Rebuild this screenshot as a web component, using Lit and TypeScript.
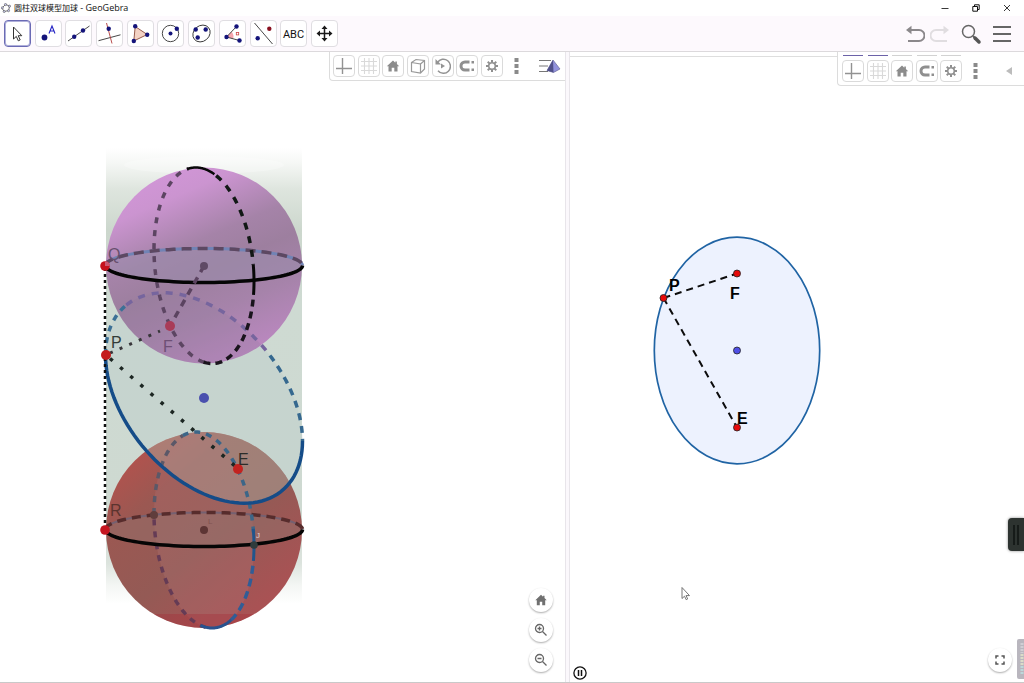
import { LitElement, html, svg, css, type TemplateResult } from "lit";
import { customElement, property, state } from "lit/decorators.js";
import { classMap } from "lit/directives/class-map.js";

const NAVY = "#14147a";

const dot = (x: number, y: number, fill = NAVY, r = 2.2) => svg`<circle cx=${x} cy=${y} r=${r} fill=${fill} />`;

const homeGlyph = svg`<path d="M8 2.6 1.8 8.2h1.7v5.2h3.2V9.8h2.6v3.6h3.2V8.2h1.7L11.9 6V3.4h-1.6v1.3z" fill="#8c8c8c" />`;

/* Construction tools, each drawn on a 27 x 27 grid */
const TOOLS: { id: string; label: string; glyph: TemplateResult }[] = [
  { id: "move", label: "Move", glyph: svg`<path d="M9.5 7v12l2.8-2.6 2 4.4 1.9-.9-2-4.2h3.6z" fill="#fff" stroke="#333" stroke-width="1" />` },
  { id: "point", label: "Point", glyph: svg`${dot(9.5, 17.5, NAVY, 2.9)}<path d="M14 13.5 17 6l3 7.500M15 11h4" fill="none" stroke="#2424c4" stroke-width="1.1" />` },
  { id: "line", label: "Line", glyph: svg`<path d="M3 21 24.500 6" stroke="#333" stroke-width=".9" />${dot(9.2, 16.800)}${dot(18, 10.500)}` },
  { id: "perpendicular", label: "Perpendicular line", glyph: svg`<path d="M2.500 20.700 24.500 14.800" stroke="#333" stroke-width=".9" /><path d="m10.500 3 5.500 20.500" stroke="#b03a3a" stroke-width=".9" />${dot(12.700, 8.700)}` },
  { id: "polygon", label: "Polygon", glyph: svg`<path d="M8.200 6.500 20.200 14.500 6.800 21z" fill="#f3d2c4" stroke="#8a4a3a" stroke-width=".9" />${dot(8.200, 6.200)}${dot(20.200, 14.700)}${dot(6.800, 21)}` },
  { id: "circle", label: "Circle with centre", glyph: svg`<circle cx="13.500" cy="13.500" r="8.200" fill="none" stroke="#333" stroke-width=".9" />${dot(13.500, 13.500, NAVY, 2)}${dot(19.800, 8.800)}` },
  { id: "conic", label: "Conic through points", glyph: svg`<ellipse cx="13.500" cy="13.500" rx="9.200" ry="7.800" transform="rotate(-40 13.500 13.500)" fill="none" stroke="#333" stroke-width=".9" />${dot(7.700, 9.500)}${dot(17.700, 9.500)}${dot(9.700, 17.500)}` },
  { id: "angle", label: "Angle", glyph: svg`<path d="M7.500 17 12.500 11.700a7 7 0 0 1 1.600 7z" fill="#f5a5ad" /><path d="M17.500 6.500 7.500 17l13 3.500" fill="none" stroke="#333" stroke-width=".9" /><rect x="17.300" y="12.500" width="2.400" height="2.400" fill="none" stroke="#c44" stroke-width=".8" />${dot(17.500, 6.500)}${dot(7.500, 17)}${dot(20.500, 20.500)}` },
  { id: "reflect", label: "Reflect about line", glyph: svg`<path d="M4.500 3 22.500 24" stroke="#333" stroke-width=".9" />${dot(19.300, 8.700, "#8a1020")}${dot(7.700, 18.300)}` },
  { id: "text", label: "Text", glyph: svg`<text x="13.500" y="17.500" text-anchor="middle" class="abc">ABC</text>` },
  { id: "pan", label: "Move graphics view", glyph: svg`<path d="M7 13.500h13M13.500 7v13" stroke="#1a1a1a" stroke-width="1.500" /><path d="m13.500 5.500 3 3.500h-6zM13.500 21.500l3-3.500h-6zM5.500 13.500l3.500-3v6zM21.500 13.500l-3.500-3v6z" fill="#1a1a1a" />` },
];

/* View toolbar glyphs on a 16 x 16 grid */
const VIEW_GLYPHS: Record<string, TemplateResult> = {
  axes: svg`<path d="M0 10.500h16M6.500 0v16" stroke="#929292" stroke-width="1.400" />`,
  grid: svg`<path d="M0 3.500h16M0 8h16M0 12.500h16M3.500 0v16M8 0v16M12.500 0v16" stroke="#d9d9d9" stroke-width="1.100" />`,
  home: homeGlyph,
  cube: svg`<path d="M1.500 4.500 6 1.500l8.500 1v8.500l-4 4-9-1.500zM1.500 4.500l9 1.500v9M10.500 6l4-3.500" fill="none" stroke="#999" stroke-width="1.200" />`,
  rotate: svg`<path d="M2.500 4.500A7 7 0 1 1 3 12.700" fill="none" stroke="#939393" stroke-width="1.500" /><path d="M0.500 1v5.500h5.500z" fill="#939393" /><path d="M6 5.500v5l4-2.500z" fill="#939393" />`,
  magnet: svg`<path d="M10.500 4H6a4 4 0 0 0 0 8h4.500" fill="none" stroke="#8f8f8f" stroke-width="3" /><path d="M12.500 3h2.500v2.500h-2.500zM12.500 10.500h2.500v2.500h-2.500z" fill="#8f8f8f" />`,
  gear: svg`<circle cx="8" cy="8" r="3.300" fill="none" stroke="#8f8f8f" stroke-width="1.600" /><g stroke="#8f8f8f" stroke-width="2">${[0, 45, 90, 135, 180, 225, 270, 315].map((a) => svg`<path d="M8 2v2.300" transform=${`rotate(${a} 8 8)`} />`)}</g>`,
};
const VIEW_NAMES: Record<string, string> = {
  axes: "Axes", grid: "Grid", home: "Standard view", cube: "View direction", rotate: "Rotate view", magnet: "Point capturing", gear: "Settings",
};

/* Path of the curve c + u·cos t + v·sin t, with t in degrees */
function curve(cx: number, cy: number, ux: number, uy: number, vy: number, from: number, to: number): string {
  const steps = 60;
  const pts: string[] = [];
  for (let i = 0; i <= steps; i++) {
    const t = ((from + ((to - from) * i) / steps) * Math.PI) / 180;
    pts.push(`${(cx + ux * Math.cos(t)).toFixed(2)} ${(cy + uy * Math.cos(t) + vy * Math.sin(t)).toFixed(2)}`);
  }
  return "M" + pts.join("L");
}

@customElement("view-toolbar")
class ViewToolbar extends LitElement {
  @property({ type: Array }) items: string[] = [];
  @property({ type: Boolean }) plane = false;

  static styles = css`
    :host { display: block; }
    .bar { display: flex; align-items: center; box-sizing: border-box; height: 29px; padding: 0 3px; background: #fff; border: 1px solid #dcdcdc; border-top: 0; border-right: 0; border-bottom-left-radius: 4px; }
    .plane { height: 34px; padding-top: 5px; padding-left: 4px; }
    .group { display: flex; justify-content: space-between; width: 170px; }
    .plane .group { width: 120px; }
    .slot { position: relative; display: flex; }
    .mark { position: absolute; left: 1px; right: 1px; top: -5px; height: 1px; background: #d2d2d2; }
    .on { background: #6c62a8; }
    button { display: grid; place-items: center; box-sizing: border-box; width: 22px; height: 22px; padding: 0; background: #fff; border: 1px solid #dadada; border-radius: 4px; }
    .bare { border: 0; background: none; }
    .more { width: 26px; }
    .style { margin-left: 10px; }
    .fold { margin-left: 10px; }
  `;

  render() {
    return html`<div class=${classMap({ bar: true, plane: this.plane })} role="toolbar" aria-label="View">
      <div class="group">
        ${this.items.map((name) => html`<span class="slot">
          ${this.plane ? html`<span class=${classMap({ mark: true, on: name === "axes" || name === "grid" })}></span>` : ""}
          <button aria-label=${VIEW_NAMES[name]}><svg width="16" height="16" viewBox="0 0 16 16">${VIEW_GLYPHS[name]}</svg></button>
        </span>`)}
      </div>
      <button class="bare more" aria-label="More"><svg width="5" height="18" viewBox="0 0 5 18"><path d="M.5 1h4v4h-4zM.5 7h4v4h-4zM.5 13h4v4h-4z" fill="#8a8a8a" /></svg></button>
      ${this.plane
        ? html`<button class="bare fold" aria-label="Collapse"><svg width="6" height="8" viewBox="0 0 6 8"><path d="M6 0v8L0 4z" fill="#bcbcbc" /></svg></button>`
        : html`<button class="bare style" aria-label="Style bar"><svg width="22" height="16" viewBox="0 0 22 16"><path d="M0 2.500h12M0 8h9M0 13.500h9" stroke="#777" stroke-width="1.200" /><path d="M14 2 8 12.500l6.500 2 6.500-3.500z" fill="#9292dc" stroke="#5a5a8c" stroke-width=".6" /><path d="M14 2 8 12.500l6.500 2z" fill="#50508a" /></svg></button>`}
    </div>`;
  }
}

@customElement("space-view")
class SpaceView extends LitElement {
  static styles = css`
    :host { display: block; height: 100%; }
    .scene { display: block; width: 100%; height: 100%; font-family: "Liberation Sans", Arial, sans-serif; }
    .label { font-size: 16px; }
    .small { font-size: 8px; }
  `;

  render() {
    const ring = (cy: number, a: number, b: number) => curve(204, cy, 98.5, 0, 17, a, b);
    const meridian = (cy: number, a: number, b: number) => curve(204, cy, 50, 16, 96.700, a, b);
    const section = (a: number, b: number) => curve(204, 398, 98.500, 43, 96, a, b);
    return html`<svg class="scene" viewBox="0 52 565 630" preserveAspectRatio="xMinYMin slice" role="img" aria-label="Cylinder with two inscribed spheres">
      <defs>
        <linearGradient id="wall" x1="0" y1="0" x2="0" y2="1">
          <stop offset="0" stop-color="#d3dcd2" stop-opacity="0" />
          <stop offset=".03" stop-color="#d3dcd2" stop-opacity=".2" />
          <stop offset=".09" stop-color="#d0dad0" stop-opacity=".7" />
          <stop offset=".18" stop-color="#ccd7cd" />
          <stop offset=".34" stop-color="#cedad2" />
          <stop offset=".8" stop-color="#ced9d1" />
          <stop offset=".91" stop-color="#d0dad2" stop-opacity=".75" />
          <stop offset=".96" stop-color="#d3dcd4" stop-opacity=".25" />
          <stop offset="1" stop-color="#d3dcd4" stop-opacity="0" />
        </linearGradient>
        <linearGradient id="violet" x1=".2" y1=".03" x2=".62" y2="1">
          <stop offset="0" stop-color="#d296d8" />
          <stop offset=".16" stop-color="#cb94d0" />
          <stop offset=".4" stop-color="#a583a8" />
          <stop offset=".55" stop-color="#9d7f9f" />
          <stop offset=".75" stop-color="#a683aa" />
          <stop offset="1" stop-color="#bb88c0" />
        </linearGradient>
        <linearGradient id="rust" x1="0" y1=".2" x2=".65" y2="1">
          <stop offset="0" stop-color="#b4524d" />
          <stop offset=".25" stop-color="#9b5852" />
          <stop offset=".6" stop-color="#945a55" />
          <stop offset="1" stop-color="#a95254" />
        </linearGradient>
        <clipPath id="rustClip"><circle cx="204" cy="530" r="98" /></clipPath>
        <clipPath id="violetClip"><circle cx="204" cy="265.500" r="98" /></clipPath>
      </defs>

      <rect x="106" y="148" width="196" height="456" fill="url(#wall)" />
      <ellipse cx="204" cy="165" rx="80" ry="9" fill="#fff" opacity=".25" />
      <path d=${section(0, 360)} fill="#c3d1cd" opacity=".7" />

      <circle cx="204" cy="265.500" r="98" fill="url(#violet)" />
      <path d=${section(0, 360)} fill="#8f7a99" opacity=".22" clip-path="url(#violetClip)" />
      <path d=${ring(265.500, 0, 360)} fill="#9b8cac" opacity=".6" />

      <circle cx="204" cy="530" r="98" fill="url(#rust)" />
      <path d=${section(0, 360)} fill="#acb0a4" opacity=".45" clip-path="url(#rustClip)" />
      <path d=${meridian(530, 0, 360)} fill="#b0767a" opacity=".28" />
      <path d=${ring(529.500, 0, 360)} fill="#94706c" opacity=".5" />
      <rect x="106" y="614" width="196" height="14" fill="#a52c36" opacity=".35" clip-path="url(#rustClip)" />

      <g fill="none" stroke-width="3.500">
        <path d=${section(180, 218)} stroke="#3c7096" stroke-dasharray="6 6" />
        <path d=${section(218, 312)} stroke="#76659e" stroke-dasharray="7 7" />
        <path d=${section(312, 360)} stroke="#35688f" stroke-dasharray="7 6" />

        <path d=${ring(265.500, 180, 360)} stroke="#7183b5" stroke-width="3" />
        <path d=${ring(265.500, 180, 360)} stroke="#5d4862" stroke-dasharray="10 6" />
        <path d=${meridian(265.500, 90, 252)} stroke="#5c4562" stroke-dasharray="6 7" />
        <path d=${meridian(265.500, 250, 282)} stroke="#080808" stroke-width="2.500" />
        <path d=${meridian(265.500, 284, 350)} stroke="#111815" stroke-dasharray="7 7" />
        <path d=${meridian(265.500, -10, 8)} stroke="#080808" stroke-width="3" />
        <path d=${meridian(265.500, 11, 94)} stroke="#19141c" stroke-dasharray="7 5" />
        <path d=${ring(265.500, 0, 180)} stroke="#050505" />

        <path d=${ring(529.500, 180, 360)} stroke="#756070" stroke-width="2" />
        <path d=${ring(529.500, 180, 360)} stroke="#572c2c" stroke-dasharray="9 6" />
        <path d=${meridian(530, 88, 180)} stroke="#653b55" stroke-dasharray="6 6" />
        <path d=${meridian(530, 180, 245)} stroke="#5b5868" stroke-dasharray="6 6" />
        <path d=${meridian(530, 245, 352)} stroke="#3c6688" stroke-dasharray="6 6" />
        <path d=${meridian(530, -10, 9)} stroke="#22558c" stroke-width="3" />
        <path d=${meridian(530, 12, 57)} stroke="#315d96" stroke-dasharray="8 5" />
        <path d=${meridian(530, 57, 94)} stroke="#28528e" stroke-width="3" />
        <path d=${ring(529.500, 0, 180)} stroke="#050505" />
        <path d=${section(0, 180)} stroke="#154c88" />
      </g>

      <path d="M105 268V528" stroke="#101010" stroke-width="2.500" stroke-dasharray="3 3" />
      <path d="m204 266-34 60" stroke="#5b4360" stroke-width="3.500" stroke-dasharray="7 6" />
      <path d="m110 358.500 128 110" stroke="#1c2622" stroke-width="3.500" stroke-dasharray="3.500 9.900" />
      <path d="m110 353 50-22" stroke="#38363a" stroke-width="3" stroke-dasharray="3 7.500" />

      <circle cx="105" cy="266" r="4.800" fill="#c5121c" />
      <path d="M105 266h4.800a4.800 4.800 0 0 0-4.800-4.800z" fill="#c85872" />
      <circle cx="106" cy="355" r="5" fill="#c41c1c" />
      <circle cx="105" cy="530" r="4.800" fill="#c51520" />
      <circle cx="170" cy="326" r="5" fill="#a93b58" />
      <circle cx="238" cy="469" r="5" fill="#c32320" />
      <circle cx="204" cy="398" r="5" fill="#4a50ae" />
      <circle cx="204" cy="266" r="4" fill="#5f4a65" />
      <circle cx="204" cy="530" r="4" fill="#5d3534" />
      <circle cx="154" cy="515" r="4" fill="#603d3c" />
      <circle cx="254" cy="545" r="3.800" fill="#303b3c" />

      <text class="label" x="108" y="260" fill="#67506e">Q</text>
      <text class="label" x="111" y="348" fill="#323c38">P</text>
      <text class="label" x="163" y="352" fill="#6e5075">F</text>
      <text class="label" x="238" y="465" fill="#2b2c29">E</text>
      <text class="label" x="110" y="516" fill="#5b342f">R</text>
      <text class="small" x="256" y="538" fill="#e0d6d4">J</text>
      <text class="small" x="208" y="524" fill="#805350">L</text>
    </svg>`;
  }
}

@customElement("plane-view")
class PlaneView extends LitElement {
  static styles = css`
    :host { display: block; height: 100%; }
    .scene { display: block; width: 100%; height: 100%; font: bold 16px "Liberation Sans", Arial, sans-serif; }
  `;

  render() {
    const mark = (x: number, y: number, fill: string) => svg`<circle cx=${x} cy=${y} r="3.500" fill=${fill} stroke="#222" stroke-width=".8" />`;
    return html`<svg class="scene" viewBox="570 52 454 630" preserveAspectRatio="xMinYMin slice" role="img" aria-label="Section ellipse with its foci">
      <ellipse cx="737" cy="350.500" rx="82.700" ry="113.300" fill="#edf2fe" stroke="#2064a4" stroke-width="1.700" />
      <path d="m663.500 298 73.500-24.500M663.500 298 737 427.500" stroke="#0c0c0c" stroke-width="2" stroke-dasharray="7 5" fill="none" />
      ${mark(663.5, 298, "#e60a0a")}${mark(737, 273.5, "#e60a0a")}${mark(737, 350.5, "#4f4fe6")}${mark(737, 427.5, "#e60a0a")}
      <text x="669" y="291">P</text>
      <text x="730" y="299">F</text>
      <text x="737" y="424">E</text>
      <path d="M682 587.500v11l2.500-2.300 1.700 3.500 1.500-.8-1.700-3.300h3.500z" fill="#fff" stroke="#666" stroke-width=".9" />
    </svg>`;
  }
}

@customElement("app-root")
class AppRoot extends LitElement {
  @state() private tool = "move";

  static styles = css`
    :host { display: flex; flex-direction: column; height: 100vh; overflow: hidden; background: #fff; color: #222; font-family: "Open Sans", "Noto Sans CJK SC", sans-serif; }
    button { padding: 0; border: 0; background: none; color: inherit; }
    svg { display: block; }
    .title { display: flex; align-items: center; justify-content: space-between; height: 16px; padding: 0 12px 0 1px; }
    .name { display: flex; align-items: center; margin: 0; font-size: 8px; line-height: 12px; font-weight: 400; color: #111; white-space: pre; }
    .name svg { margin-right: 3px; }
    .app { font-size: 9px; }
    .window { display: flex; gap: 21px; }
    .window button { display: grid; place-items: center; width: 10px; height: 12px; }
    .tools { display: flex; align-items: center; justify-content: space-between; box-sizing: border-box; height: 36px; padding: 0 12px 0 4px; background: #fdf9fd; border-bottom: 1px solid #dcd9dc; }
    .set { display: flex; justify-content: space-between; width: 334px; }
    .tool { box-sizing: border-box; width: 27px; height: 27px; background: #fff; border: 1px solid #e0dee2; border-radius: 4px; }
    .tool svg { margin: -1px; }
    .active { border-color: #6a6ab4; box-shadow: inset 0 0 0 1px #b0b0da; }
    .abc { font: 11px Roboto, sans-serif; fill: #111; }
    .actions { display: flex; align-items: center; gap: 5px; }
    .actions .search, .actions .menu { margin-left: 5px; }
    .views { flex: 1; display: flex; min-height: 0; border-bottom: 1px solid #c9c9c9; }
    .space { position: relative; flex: 565 1 0; min-width: 0; }
    .divider { box-sizing: border-box; width: 5px; background: #fbf8fc; border: 1px solid #e8e5ea; border-width: 0 1px; }
    .plane { position: relative; flex: 454 1 0; min-width: 0; }
    .strip { position: absolute; inset: 0 0 auto 0; height: 4px; border-bottom: 1px solid #dedede; }
    .bar { position: absolute; top: 0; right: 0; }
    .bar.left { width: 236px; }
    .bar.right { width: 187px; }
    .float { position: absolute; right: 12px; bottom: 10px; display: grid; gap: 6px; }
    .round { display: grid; place-items: center; width: 24px; height: 24px; border-radius: 50%; background: #fff; box-shadow: 0 1px 2px #0005; }
    .pause { position: absolute; left: 3px; bottom: 2px; }
    .drawer { position: absolute; right: 0; bottom: 131px; width: 16px; height: 33px; background: #2d3330; border-radius: 4px 0 0 4px; box-shadow: 0 0 3px #0007; display: grid; place-items: center; }
    .meter { position: absolute; right: 0; bottom: 3px; width: 7px; height: 40px; background: #b9b6be; border-radius: 2px 0 0 2px; display: grid; place-items: center end; }
  `;

  render() {
    return html`
      <header class="title">
        <h1 class="name"><svg width="10" height="10" viewBox="0 0 10 10"><path d="M4.500 1.500 8.500 3l-.8 4.500-4.500 1L1 5z" fill="none" stroke="#555" stroke-width=".8" />${[[4.5, 1.5], [8.500, 3.200], [7.500, 7.700], [3.200, 8.500], [1.300, 4.800]].map(([x, y]) => svg`<circle cx=${x} cy=${y} r="1.100" fill="#c9c9ef" stroke="#444" stroke-width=".5" />`)}</svg><span>圆柱双球模型加球</span><span class="app"> - GeoGebra</span></h1>
        <div class="window">
          <button aria-label="Minimise"><svg width="8" height="8" viewBox="0 0 8 8"><path d="M.5 4.500h7" stroke="#222" stroke-width=".9" /></svg></button>
          <button aria-label="Restore"><svg width="8" height="8" viewBox="0 0 8 8"><path d="M2.500 2V.8h4.700v4.700H6M.8 2.500h4.700v4.700H.8z" fill="none" stroke="#111" stroke-width="1" /></svg></button>
          <button aria-label="Close"><svg width="8" height="8" viewBox="0 0 8 8"><path d="m1 1 6 6M7 1 1 7" stroke="#222" stroke-width=".9" /></svg></button>
        </div>
      </header>

      <nav class="tools" aria-label="Tools">
        <div class="set">
          ${TOOLS.map((t) => html`<button class=${classMap({ tool: true, active: t.id === this.tool })} aria-label=${t.label} aria-pressed=${t.id === this.tool} @click=${() => (this.tool = t.id)}><svg width="27" height="27" viewBox="0 0 27 27">${t.glyph}</svg></button>`)}
        </div>
        <div class="actions">
          <button aria-label="Undo"><svg width="20" height="18" viewBox="0 0 20 18"><path d="M3 5h11a5.500 5.500 0 0 1 0 11H3" fill="none" stroke="#8b888b" stroke-width="2" /><path d="M1 5 6.500.8v8.400z" fill="#8b888b" /></svg></button>
          <button aria-label="Redo"><svg width="20" height="18" viewBox="0 0 20 18"><path d="M17 5H6a5.500 5.500 0 0 0 0 11h11" fill="none" stroke="#e0dde0" stroke-width="2" /><path d="M19 5 13.500.8v8.400z" fill="#e0dde0" /></svg></button>
          <button class="search" aria-label="Search"><svg width="22" height="22" viewBox="0 0 22 22"><circle cx="8.500" cy="8.500" r="6" fill="none" stroke="#666" stroke-width="1.500" /><path d="m13 13 2 2" stroke="#666" stroke-width="2" /><path d="m15 15 4 4" stroke="#555" stroke-width="3.500" stroke-linecap="round" /></svg></button>
          <button class="menu" aria-label="Menu"><svg width="20" height="18" viewBox="0 0 20 18"><path d="M1 2h18M1 9h18M1 16h18" stroke="#666" stroke-width="2" /></svg></button>
        </div>
      </nav>

      <main class="views">
        <section class="space" aria-label="3D Graphics">
          <space-view></space-view>
          <view-toolbar class="bar left" .items=${["axes", "grid", "home", "cube", "rotate", "magnet", "gear"]}></view-toolbar>
          <div class="float">
            <button class="round" aria-label="Standard view"><svg width="14" height="14" viewBox="0 0 16 16"><path d="M8 2 1.500 8.200h1.700v5.800h3.400v-4h2.800v4h3.400V8.200h1.700L12 5.700V3h-1.600v1.200z" fill="#707070" /></svg></button>
            <button class="round" aria-label="Zoom in"><svg width="14" height="14" viewBox="0 0 14 14"><circle cx="5.500" cy="5.500" r="4" fill="none" stroke="#666" stroke-width="1.300" /><path d="m8.500 8.500 4 4M3.500 5.500h4M5.500 3.500v4" stroke="#666" stroke-width="1.300" /></svg></button>
            <button class="round" aria-label="Zoom out"><svg width="14" height="14" viewBox="0 0 14 14"><circle cx="5.500" cy="5.500" r="4" fill="none" stroke="#666" stroke-width="1.300" /><path d="m8.500 8.500 4 4M3.500 5.500h4" stroke="#666" stroke-width="1.300" /></svg></button>
          </div>
        </section>
        <div class="divider"></div>
        <section class="plane" aria-label="Graphics">
          <plane-view></plane-view>
          <div class="strip"></div>
          <view-toolbar class="bar right" plane .items=${["axes", "grid", "home", "magnet", "gear"]}></view-toolbar>
          <button class="pause" aria-label="Pause"><svg width="14" height="14" viewBox="0 0 14 14"><circle cx="7" cy="7" r="6.100" fill="#fff" stroke="#111" stroke-width="1.300" /><path d="M5.500 4v6M8.500 4v6" stroke="#111" stroke-width="1.500" /></svg></button>
          <button class="drawer" aria-label="Open side panel"><svg width="8" height="22" viewBox="0 0 8 22"><path d="M2 1v20M6 1v20" stroke="#0c100e" stroke-width="1.300" /></svg></button>
          <div class="float"><button class="round" aria-label="Full screen"><svg width="10" height="10" viewBox="0 0 10 10"><path d="M1 3.500V1h2.500M6.500 1H9v2.500M9 6.500V9H6.500M3.500 9H1V6.500" fill="none" stroke="#555" stroke-width="1.500" /></svg></button></div>
          <div class="meter"><svg width="4" height="32" viewBox="0 0 4 32"><path d="M2 0v10" stroke="#d0ced4" stroke-width="3" stroke-dasharray="2 1" /><path d="M2 11v12" stroke="#dcdcc8" stroke-width="3" stroke-dasharray="2 1" /><path d="M2 23v9" stroke="#bcd8da" stroke-width="3" stroke-dasharray="2 1" /></svg></div>
        </section>
      </main>`;
  }
}
